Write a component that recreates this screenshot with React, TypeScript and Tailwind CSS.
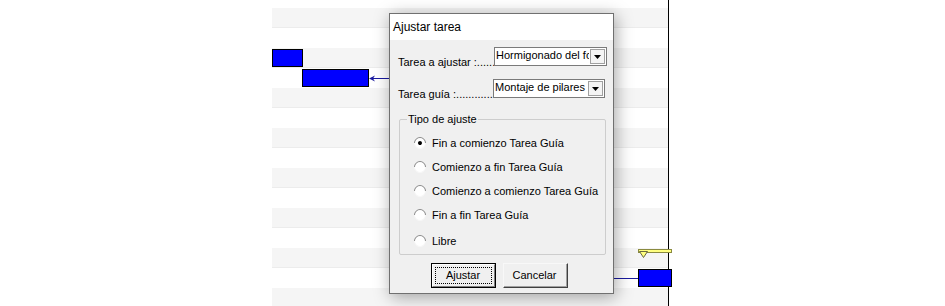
import React from "react";

const font = { fontFamily: '"Liberation Sans", Arial, sans-serif' };

const options = [
  "Fin a comienzo Tarea Guía",
  "Comienzo a fin Tarea Guía",
  "Comienzo a comienzo Tarea Guía",
  "Fin a fin Tarea Guía",
  "Libre",
];

function Radio({ checked }: { checked?: boolean }) {
  return (
    <div className="flex h-[12px] w-[12px] shrink-0 rotate-45 items-center justify-center rounded-full border border-b-[#f6f6f6] border-l-[#8a8a8a] border-r-[#f6f6f6] border-t-[#8a8a8a] bg-white">
      {checked && <div className="h-[4px] w-[4px] rounded-full bg-black" />}
    </div>
  );
}

function Combo({ value }: { value: string }) {
  return (
    <div className="flex h-[19px] w-[113px] border border-[#7a7a7a] bg-white">
      <div className="flex-1 overflow-hidden whitespace-nowrap pl-[1px] text-[11px] leading-[15px] text-black">
        {value}
      </div>
      <div className="m-[1px] flex w-[15px] items-center justify-center border border-[#a0a0a0] bg-[#f4f4f4]">
        <svg width="7" height="4" viewBox="0 0 7 4">
          <path d="M0 0 H7 L3.5 4 Z" fill="#000" />
        </svg>
      </div>
    </div>
  );
}

export default function App() {
  const stripes = Array.from({ length: 8 });

  return (
    <div className="relative h-[306px] w-[945px] overflow-hidden bg-white" style={font}>
      <div className="flex h-full">
        <div className="w-[272px]" />
        {/* gantt grid */}
        <div className="relative h-full w-[396px]">
          <div className="flex flex-col pt-[8px]">
            {stripes.map((_, i) => (
              <div key={i}>
                <div className="h-[20px] border-b border-[#ececec] bg-[#f5f5f5]" />
                <div className="h-[20px] bg-white" />
              </div>
            ))}
          </div>
          {/* bars */}
          <div className="absolute left-0 top-[49px] h-[18px] w-[31px] border border-black bg-[#0000ff]" />
          <div className="absolute left-[30px] top-[69px] h-[18px] w-[67px] border border-black bg-[#0000ff]" />
          <div className="absolute left-[98px] top-[78px] h-px w-[22px] bg-[#1a1aa0]" />
          <svg className="absolute left-[97px] top-[75px]" width="7" height="7" viewBox="0 0 7 7">
            <path d="M0 3.5 L6 0.5 L4 3.5 L6 6.5 Z" fill="#1a1aa0" />
          </svg>
          <div className="absolute left-[340px] top-[278px] h-px w-[26px] bg-[#1a1aa0]" />
          <div className="absolute left-[366px] top-[249px] h-[4px] w-[34px] border border-[#8a8a40] bg-[#ffff80]" />
          <svg className="absolute left-[367px] top-[251px]" width="9" height="7" viewBox="0 0 9 7">
            <path d="M0.5 0.5 H8.5 L4.5 6.5 Z" fill="#ffff80" stroke="#6a6a40" strokeWidth="1" />
          </svg>
          <div className="absolute left-[366px] top-[269px] h-[18px] w-[34px] border border-black bg-[#0000ff]" />
        </div>
        <div className="h-full w-px bg-black" />
        <div className="flex-1" />
      </div>

      {/* dialog */}
      <div className="absolute left-[389px] top-[13px] flex h-[281px] w-[225px] flex-col border border-[#707070] bg-[#f0f0f0] shadow-[2px_3px_16px_rgba(0,0,0,0.35)]">
        <div className="flex h-[26px] items-center bg-white pl-[3px] text-[12px] text-black">Ajustar tarea</div>
        <div className="flex flex-col px-[8px] pt-[7px] text-[11px] text-black">
          <div className="flex items-end">
            <div className="mb-[-3px] w-[96px] whitespace-nowrap leading-[13px]">Tarea a ajustar :......</div>
            <Combo value="Hormigonado del forjado" />
          </div>
          <div className="mt-[13px] flex items-end">
            <div className="mb-[-3px] w-[96px] whitespace-nowrap leading-[13px]">Tarea guía :............</div>
            <Combo value="Montaje de pilares" />
          </div>
          {/* group box */}
          <div className="relative ml-[1px] mt-[21px] h-[136px] w-[207px] rounded-[2px] border border-[#cdcdcd]">
            <div className="absolute left-[7px] top-[-8px] bg-[#f0f0f0] px-[1px] leading-[14px]">Tipo de ajuste</div>
            <div className="flex flex-col gap-[12px] pl-[14px] pt-[17px]">
              {options.map((o, i) => (
                <div key={o} className={`flex items-center gap-[6px] leading-[12px] ${i === 4 ? "mt-[2px]" : ""}`}>
                  <Radio checked={i === 0} />
                  <span>{o}</span>
                </div>
              ))}
            </div>
          </div>
          {/* buttons */}
          <div className="mt-[8px] flex justify-center gap-[7px] pr-[5px]">
            <div className="h-[25px] w-[65px] border border-black">
              <div className="flex h-full items-center justify-center border-b border-l border-r border-t border-b-[#808080] border-l-white border-r-[#808080] border-t-white bg-[#f0f0f0] p-[2px]">
                <div className="flex h-full w-full items-center justify-center border border-dotted border-black">Ajustar</div>
              </div>
            </div>
            <div className="h-[25px] w-[65px] border-b border-l border-r border-t border-b-[#404040] border-l-[#f8f8f8] border-r-[#404040] border-t-[#f8f8f8]">
              <div className="flex h-full items-center justify-center border-b border-r border-b-[#a0a0a0] border-r-[#a0a0a0] bg-[#f0f0f0]">
                Cancelar
              </div>
            </div>
          </div>
        </div>
      </div>
    </div>
  );
}
